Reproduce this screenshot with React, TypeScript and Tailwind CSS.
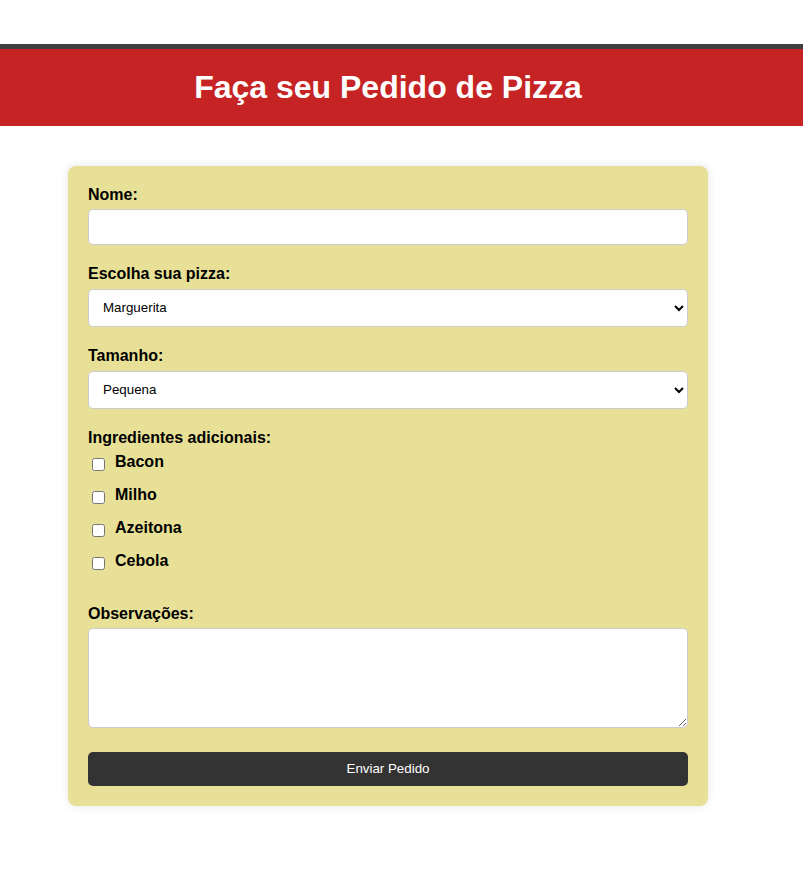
import React from 'react';

const font = { fontFamily: '"Liberation Sans", Arial, sans-serif' };

const ingredientes = ['Bacon', 'Milho', 'Azeitona', 'Cebola'];

export default function App() {
  return (
    <div className="min-h-[880px] bg-white text-black" style={font}>
      <div className="h-[44px]" />
      <header className="border-t-[5px] border-[#3f3f3f] bg-[#c62424]">
        <div className="flex h-[77px] w-[776px] items-center justify-center">
          <h1 className="text-[32px] font-bold leading-[1.15] text-white">Faça seu Pedido de Pizza</h1>
        </div>
      </header>

      <div className="w-[776px] pt-[40px]">
        <form className="mx-auto w-[640px] rounded-[8px] bg-[#e7e096] p-[20px] shadow-[0_0_10px_rgba(0,0,0,0.1)]">
          <label className="mb-[5px] block text-[16px] font-bold leading-[1.15]">Nome:</label>
          <input
            type="text"
            className="mb-[20px] block h-[36px] w-full rounded-[5px] border border-[#cccccc] bg-white px-[10px] text-[16px]"
          />

          <label className="mb-[5px] block text-[16px] font-bold leading-[1.15]">Escolha sua pizza:</label>
          <select className="mb-[20.5px] block h-[38px] w-full rounded-[5px] border border-[#cccccc] bg-white px-[10px] text-[13.33px]">
            <option>Marguerita</option>
            <option>Calabresa</option>
            <option>Quatro Queijos</option>
          </select>

          <label className="mb-[5px] block text-[16px] font-bold leading-[1.15]">Tamanho:</label>
          <select className="mb-[20.5px] block h-[38px] w-full rounded-[5px] border border-[#cccccc] bg-white px-[10px] text-[13.33px]">
            <option>Pequena</option>
            <option>Média</option>
            <option>Grande</option>
          </select>

          <label className="mb-[5px] block text-[16px] font-bold leading-[1.15]">Ingredientes adicionais:</label>
          <div className="mb-[35px] flex flex-col gap-[15px]">
            {ingredientes.map((item) => (
              <div key={item} className="flex h-[18px] items-start">
                <input type="checkbox" className="ml-[4px] mt-[5px] h-[13px] w-[13px]" />
                <span className="ml-[10px] text-[16px] font-bold leading-[18px]">{item}</span>
              </div>
            ))}
          </div>

          <label className="mb-[5px] block text-[16px] font-bold leading-[1.15]">Observações:</label>
          <textarea className="mb-[24px] block h-[100px] w-full rounded-[5px] border border-[#cccccc] bg-white px-[10px]" />

          <button
            type="button"
            className="block h-[34px] w-full rounded-[5px] bg-[#333333] text-[13.33px] text-white"
          >
            Enviar Pedido
          </button>
        </form>
      </div>
    </div>
  );
}
